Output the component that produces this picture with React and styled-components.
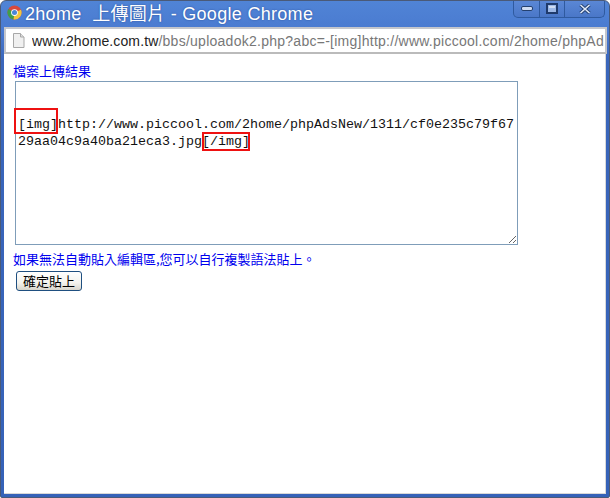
import React from "react";
import styled, { createGlobalStyle } from "styled-components";

const Global = createGlobalStyle`
  html, body { margin: 0; padding: 0; background: #fff; }
  #root { width: 610px; height: 498px; }
`;

const Win = styled.div`
  width: 610px; height: 498px; box-sizing: border-box;
  display: flex; flex-direction: column;
  padding: 0 3px 3px 3px;
  background: linear-gradient(180deg, #5084d6 0, #4a7ad0 30px, #3a66bb 60px, #3562b8 100%);
  border: 1px solid #4a5a78;
  border-radius: 6px 6px 2px 2px;
  overflow: hidden;
`;
const TitleBar = styled.div`
  height: 25px; flex: none; display: flex; align-items: center; gap: 3px; padding-left: 2px; padding-bottom: 3px; box-sizing: border-box;
  position: relative;
`;
const TitleText = styled.span`
  font-family: "Liberation Sans", "Noto Sans CJK TC", sans-serif;
  font-size: 18px; color: #fff; white-space: pre; letter-spacing: 0.3px;
  text-shadow: 0 0 2px #2a4f9a;
`;
const WinButtons = styled.div`
  position: absolute; right: 1px; top: -1px; height: 18px; width: 92px; display: flex;
  border: 1px solid #2f5a9f; border-top: none; border-radius: 0 0 5px 5px; box-sizing: border-box;
  background: linear-gradient(180deg, #5b88d6, #4a77c8);
`;
const WinBtn = styled.div`
  width: ${p => p.$w}px; display: flex; align-items: center; justify-content: center;
  border-left: ${p => p.$sep ? "1px solid #2f5a9f" : "none"};
  box-sizing: border-box;
`;
const AddressBar = styled.div`
  height: 27px; flex: none; margin: 1px -1px 0 0; box-sizing: border-box;
  background: #fff; border: 2px solid #c4c6cc; border-bottom-color: #bbb;
  display: flex; align-items: center; padding-left: 6px; overflow: hidden;
`;
const Url = styled.div`
  font-family: "Liberation Sans", sans-serif; font-size: 14px; letter-spacing: 0.26px;
  color: #777; white-space: nowrap; margin-left: 7px; overflow: hidden; width: 572px;
`;
const Host = styled.span`color: #222; letter-spacing: 0.12px;`;
const Content = styled.div`
  flex: 1; background: #fff; position: relative; padding: 8px 0 0 9px;
  font-family: "Noto Sans CJK TC", "Liberation Sans", sans-serif;
  border: 1px solid #d8d8d8; border-width: 0 1px 1px 0;
`;
const BlueText = styled.div`
  font-size: 13px; line-height: 18px; color: #0000ee; height: 18px;
`;
const Editor = styled.textarea`
  display: block; width: 503px; height: 164px; box-sizing: border-box; margin: 1px 0 0 2px;
  border: 1px solid #7f9db9; padding: 0 2px 2px 2px; outline: none;
  font-family: "Liberation Mono", monospace; font-size: 13.33px; line-height: 17px;
  color: #111; word-break: break-all; overflow: hidden; resize: both; border-radius: 0; background: #fff;
`;
const Hint = styled(BlueText)`
  margin-top: 5px;
`;
const Confirm = styled.button`
  display: block; margin: 3px 0 0 3px; width: 66px; height: 20px; padding: 0;
  border: 1px solid #1f4f80; border-radius: 3px;
  background: linear-gradient(180deg, #ffffff 0, #f4f3ee 60%, #d8d5cb 100%);
  font-family: "Noto Sans CJK TC", "Liberation Sans", sans-serif; font-size: 13px; line-height: 18px; color: #000;
`;
const RedBox = styled.div`
  position: absolute; box-sizing: border-box; border: 2px solid #ee1111; pointer-events: none;
  left: ${p => p.$l}px; top: ${p => p.$t}px; width: ${p => p.$w}px; height: ${p => p.$h}px;
`;

const ChromeLogo = () => (
  <svg width="15" height="15" viewBox="0 0 16 16" style={{ flex: "none", margin: "0 0 0 1px" }}>
    <circle cx="8" cy="8" r="7.5" fill="#d8493c" />
    <path d="M8 8 L1.5 4.2 A7.5 7.5 0 0 0 7 15.4 Z" fill="#3f9f4a" />
    <path d="M8 8 L14.9 5 A7.5 7.5 0 0 1 7 15.4 Z" fill="#f2c63d" />
    <circle cx="8" cy="8" r="3.6" fill="#fff" />
    <circle cx="8" cy="8" r="2.7" fill="#4a86d8" />
  </svg>
);

const PageIcon = () => (
  <svg width="13" height="15" viewBox="0 0 13 15" style={{ flex: "none" }}>
    <path d="M1.5 .5H8.5L12 4V14.5H1.5Z" fill="#f0f0f0" stroke="#a8a8a8" />
    <path d="M8.5 .5V4H12" fill="#ddd" stroke="#a8a8a8" />
  </svg>
);

export default function App() {
  return (
    <Win>
      <Global />
      <TitleBar>
        <ChromeLogo />
        <TitleText>2home  上傳圖片 - Google Chrome</TitleText>
        <WinButtons>
          <WinBtn $w={25}>
            <svg width="12" height="6" viewBox="0 0 12 6"><rect x=".5" y=".5" width="11" height="4" rx="1.5" fill="#cfdcf2" stroke="#24406f" /></svg>
          </WinBtn>
          <WinBtn $w={25} $sep>
            <svg width="12" height="11" viewBox="0 0 12 11"><rect x="1" y="1" width="10" height="9" fill="#9db8e6" stroke="#1f3a6b" strokeWidth="2" /><rect x="3" y="3" width="6" height="2" fill="#cfdcf2" /></svg>
          </WinBtn>
          <WinBtn $w={40} $sep>
            <svg width="12" height="10" viewBox="0 0 12 10"><path d="M1.5 1 L10.5 9 M10.5 1 L1.5 9" stroke="#24406f" strokeWidth="3.4" /><path d="M1.5 1 L10.5 9 M10.5 1 L1.5 9" stroke="#dfe8f8" strokeWidth="1.6" /></svg>
          </WinBtn>
        </WinButtons>
      </TitleBar>
      <AddressBar>
        <PageIcon />
        <Url><Host>www.2home.com.tw</Host>/bbs/uploadok2.php?abc=-[img]http://www.piccool.com/2home/phpAdsNew/1311/cf0e235c79f67</Url>
      </AddressBar>
      <Content>
        <BlueText>檔案上傳結果</BlueText>
        <Editor readOnly defaultValue={"\n\n[img]http://www.piccool.com/2home/phpAdsNew/1311/cf0e235c79f6729aa04c9a40ba21eca3.jpg[/img]"} />
        <Hint>如果無法自動貼入編輯區,您可以自行複製語法貼上。</Hint>
        <Confirm>確定貼上</Confirm>
        <RedBox $l={10} $t={54} $w={44} $h={26} />
        <RedBox $l={198} $t={78} $w={48} $h={19} />
      </Content>
    </Win>
  );
}
